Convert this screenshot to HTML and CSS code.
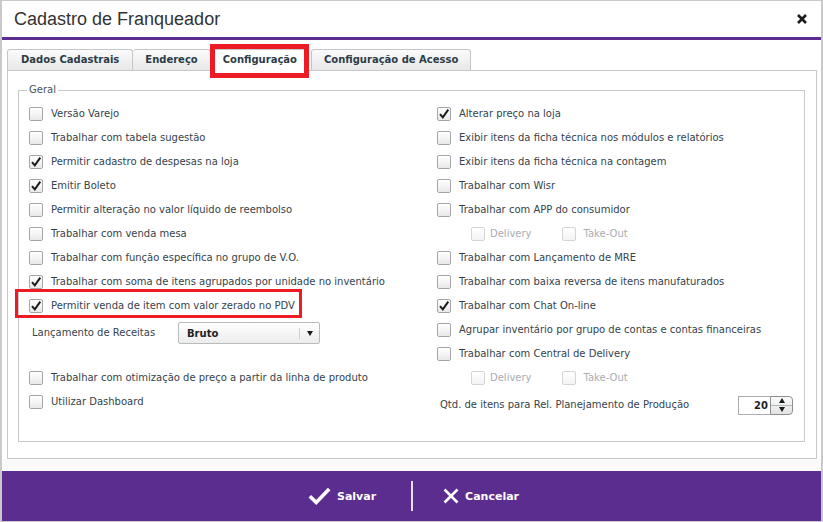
FILE: index.html
```html
<!DOCTYPE html>
<html lang="pt-BR">
<head>
<meta charset="utf-8">
<title>Cadastro de Franqueador</title>
<link rel="stylesheet" href="styles.css">
</head>
<body>
<div class="dialog">
  <header class="titlebar">
    <h1 class="title">Cadastro de Franqueador</h1>
    <span class="close" aria-label="Fechar">
      <svg width="10" height="10" viewBox="0 0 10 10"><path d="M1 1 L9 9 M9 1 L1 9" stroke="#1c1c1c" stroke-width="2.6" fill="none"/></svg>
    </span>
  </header>

  <main class="main">
    <nav class="tabs">
      <div class="tab tab-dados">Dados Cadastrais</div>
      <div class="tab tab-end">Endereço</div>
      <div class="tab tab-active">Configuração</div>
      <div class="tab tab-acesso">Configuração de Acesso</div>
    </nav>

    <section class="panel">
      <fieldset class="group">
        <legend class="legend">Geral</legend>
        <div class="cols">
          <div class="col">
            <div class="row"><span class="cb"></span><span class="lbl">Versão Varejo</span></div>
            <div class="row"><span class="cb"></span><span class="lbl">Trabalhar com tabela sugestão</span></div>
            <div class="row"><span class="cb on"><svg viewBox="0 0 14 14"><path d="M3 7.2 L5.8 10.3 L11.3 2.6"/></svg></span><span class="lbl">Permitir cadastro de despesas na loja</span></div>
            <div class="row"><span class="cb on"><svg viewBox="0 0 14 14"><path d="M3 7.2 L5.8 10.3 L11.3 2.6"/></svg></span><span class="lbl">Emitir Boleto</span></div>
            <div class="row"><span class="cb"></span><span class="lbl">Permitir alteração no valor líquido de reembolso</span></div>
            <div class="row"><span class="cb"></span><span class="lbl">Trabalhar com venda mesa</span></div>
            <div class="row"><span class="cb"></span><span class="lbl">Trabalhar com função específica no grupo de V.O.</span></div>
            <div class="row"><span class="cb on"><svg viewBox="0 0 14 14"><path d="M3 7.2 L5.8 10.3 L11.3 2.6"/></svg></span><span class="lbl">Trabalhar com soma de itens agrupados por unidade no inventário</span></div>
            <div class="row"><span class="mark"><span class="cb on"><svg viewBox="0 0 14 14"><path d="M3 7.2 L5.8 10.3 L11.3 2.6"/></svg></span><span class="lbl">Permitir venda de item com valor zerado no PDV</span></span></div>
            <div class="row row-select">
              <span class="field-lbl">Lançamento de Receitas</span>
              <span class="select"><span class="select-val">Bruto</span><span class="select-arrow"><span class="tri-down"></span></span></span>
            </div>
            <div class="row"><span class="cb"></span><span class="lbl">Trabalhar com otimização de preço a partir da linha de produto</span></div>
            <div class="row"><span class="cb"></span><span class="lbl">Utilizar Dashboard</span></div>
          </div>

          <div class="col">
            <div class="row"><span class="cb on"><svg viewBox="0 0 14 14"><path d="M3 7.2 L5.8 10.3 L11.3 2.6"/></svg></span><span class="lbl">Alterar preço na loja</span></div>
            <div class="row"><span class="cb"></span><span class="lbl">Exibir itens da ficha técnica nos módulos e relatórios</span></div>
            <div class="row"><span class="cb"></span><span class="lbl">Exibir itens da ficha técnica na contagem</span></div>
            <div class="row"><span class="cb"></span><span class="lbl">Trabalhar com Wisr</span></div>
            <div class="row"><span class="cb"></span><span class="lbl">Trabalhar com APP do consumidor</span></div>
            <div class="row row-sub">
              <span class="opt"><span class="cb off"></span><span class="lbl">Delivery</span></span>
              <span class="opt opt-2"><span class="cb off"></span><span class="lbl">Take-Out</span></span>
            </div>
            <div class="row"><span class="cb"></span><span class="lbl">Trabalhar com Lançamento de MRE</span></div>
            <div class="row"><span class="cb"></span><span class="lbl">Trabalhar com baixa reversa de itens manufaturados</span></div>
            <div class="row"><span class="cb on"><svg viewBox="0 0 14 14"><path d="M3 7.2 L5.8 10.3 L11.3 2.6"/></svg></span><span class="lbl">Trabalhar com Chat On-line</span></div>
            <div class="row"><span class="cb"></span><span class="lbl">Agrupar inventário por grupo de contas e contas financeiras</span></div>
            <div class="row"><span class="cb"></span><span class="lbl">Trabalhar com Central de Delivery</span></div>
            <div class="row row-sub">
              <span class="opt"><span class="cb off"></span><span class="lbl">Delivery</span></span>
              <span class="opt opt-2"><span class="cb off"></span><span class="lbl">Take-Out</span></span>
            </div>
            <div class="row row-qtd">
              <span class="field-lbl">Qtd. de itens para Rel. Planejamento de Produção</span>
              <span class="spin">
                <span class="spin-input">20</span>
                <span class="spin-btns">
                  <span class="spin-btn"><span class="tri-up"></span></span>
                  <span class="spin-btn"><span class="tri-down"></span></span>
                </span>
              </span>
            </div>
          </div>
        </div>
      </fieldset>
    </section>
  </main>

  <footer class="footer">
    <div class="actions">
      <span class="action action-save">
        <svg width="23" height="18" viewBox="0 0 23 18"><path d="M1.8 9.2 L8.2 15.4 L21.2 2" stroke="#fff" stroke-width="3.6" fill="none"/></svg>
        <span>Salvar</span>
      </span>
      <span class="divider"></span>
      <span class="action action-cancel">
        <svg width="16" height="16" viewBox="0 0 16 16"><path d="M1.5 1.5 L14.5 14.5 M14.5 1.5 L1.5 14.5" stroke="#fff" stroke-width="2.6" fill="none"/></svg>
        <span>Cancelar</span>
      </span>
    </div>
  </footer>
</div>
</body>
</html>
```

FILE: styles.css
```css
* { box-sizing: border-box; }

body {
  margin: 0;
  background: #cfcfcf;
  font-family: "DejaVu Sans", Verdana, sans-serif;
  font-size: 10px;
  color: #34434c;
}

.dialog {
  width: 823px;
  height: 522px;
  border-style: solid;
  border-color: #c9c9c9;
  border-width: 1px 2px 1px 2px;
  background: #fff;
  display: flex;
  flex-direction: column;
}

/* title bar */
.titlebar {
  height: 39px;
  flex: none;
  border-bottom: 3px solid #5b2d8e;
  display: flex;
  align-items: center;
  justify-content: space-between;
  padding: 0 14px 0 12px;
}
.title {
  margin: 0;
  font: 18px "Liberation Sans", Arial, sans-serif;
  color: #333;
}
.close { display: flex; }

/* main */
.main {
  flex: 1;
  display: flex;
  flex-direction: column;
  padding: 0 4px 0 5px;
  background: #fff;
}

.tabs {
  height: 30px;
  display: flex;
  align-items: flex-end;
}
.tab {
  height: 21px;
  line-height: 20px;
  padding: 0 13px;
  border: 1px solid #c4c7c9;
  border-bottom: none;
  border-radius: 3px 3px 0 0;
  background: linear-gradient(#fbfbfb, #e8e8e8);
  font-weight: bold;
  color: #2c3c47;
  white-space: nowrap;
}
.tab-end { padding: 0 12px; border-left: none; }
.tab-active {
  position: relative;
  z-index: 1;
  background: #fff;
  height: 22px;
  margin-bottom: -1px;
  padding: 0 11px;
  margin-left: 0;
}
.tab-active::after {
  content: "";
  position: absolute;
  left: -2px;
  right: -1px;
  top: -6px;
  bottom: -7px;
  border: 5px solid #ed1c24;
}
.tab-acesso { margin-left: 2px; padding: 0 12px; }

.panel {
  flex: 1;
  border: 1px solid #c5c9cb;
  background: #fff;
  padding: 13px 11px 16px 10px;
}

.group {
  margin: 0;
  border: 1px solid #c5c9cb;
  padding: 6px 10px 21px 10px;
  min-width: 0;
}
.legend {
  padding: 0 2px;
  margin-left: -2px;
  line-height: 12px;
  color: #4a5358;
}

.cols {
  display: grid;
  grid-template-columns: 408px 1fr;
}

.row {
  height: 24px;
  display: flex;
  align-items: center;
  white-space: nowrap;
}

.cb {
  flex: none;
  width: 14px;
  height: 14px;
  border: 1px solid #a4a7a9;
  border-radius: 2px;
  background: linear-gradient(#ffffff, #e9e9e9);
  margin-right: 8px;
  display: flex;
  align-items: center;
  justify-content: center;
}
.cb svg { width: 14px; height: 14px; flex: none; margin: -1px; }
.cb svg path { fill: none; stroke: #1d1d1d; stroke-width: 2; }
.cb.off {
  border-color: #d3d5d6;
  background: linear-gradient(#ffffff, #f3f3f3);
  margin-right: 5px;
}

.lbl { line-height: 14px; }

.mark {
  position: relative;
  align-self: stretch;
  display: flex;
  align-items: center;
}
.mark::after {
  content: "";
  position: absolute;
  left: -14px;
  right: -7px;
  top: -5px;
  bottom: 0;
  border: 3px solid #ed1c24;
}

.row-select {
  height: 48px;
  align-items: flex-start;
  padding-top: 4px;
}
.field-lbl {
  padding-left: 3px;
  line-height: 22px;
}
.row-select .field-lbl { width: 149px; }

.select {
  width: 142px;
  height: 22px;
  border: 1px solid #b9bcbe;
  border-radius: 2px;
  background: linear-gradient(#ffffff, #ececec);
  display: flex;
  align-items: center;
  padding-left: 8px;
  font-weight: bold;
  color: #222;
}
.select-val { flex: 1; }
.select-arrow {
  width: 20px;
  height: 11px;
  border-left: 1px solid #cfd1d2;
  display: flex;
  align-items: center;
  justify-content: center;
}
.tri-down {
  width: 0;
  height: 0;
  border-left: 3.5px solid transparent;
  border-right: 3.5px solid transparent;
  border-top: 5px solid #1a1a1a;
}
.tri-up {
  width: 0;
  height: 0;
  border-left: 3.5px solid transparent;
  border-right: 3.5px solid transparent;
  border-bottom: 5px solid #1a1a1a;
}

.row-sub { padding-left: 34px; color: #a9adb0; }
.opt { display: flex; align-items: center; }
.opt-2 { margin-left: 30px; }
.opt-2 .cb.off { margin-right: 8px; }

.row-qtd {
  height: 30px;
  justify-content: space-between;
  padding-right: 1px;
}
.spin {
  display: flex;
  height: 19px;
}
.spin-input {
  width: 32px;
  border: 1px solid #a9acae;
  border-right: none;
  background: #fff;
  text-align: right;
  padding-right: 2px;
  line-height: 17px;
  font-weight: bold;
  color: #1e1e1e;
}
.spin-btns {
  width: 23px;
  border: 1px solid #8c8f91;
  border-radius: 0 4px 4px 0;
  background: linear-gradient(#fbfbfb, #e3e3e3);
  display: flex;
  flex-direction: column;
}
.spin-btn {
  flex: 1;
  display: flex;
  align-items: center;
  justify-content: center;
}
.spin-btn + .spin-btn { border-top: 1px solid #b5b8ba; }

/* footer */
.footer {
  flex: none;
  padding-top: 12px;
  background: #fafafa;
}
.actions {
  height: 50px;
  background: #5b2d8e;
  display: flex;
  align-items: center;
  justify-content: center;
  padding-left: 4px;
  color: #fff;
  font-weight: bold;
  font-size: 11px;
}
.action {
  display: flex;
  align-items: center;
}
.action-save svg { margin-right: 6px; }
.action-cancel svg { margin-right: 6px; }
.divider {
  width: 2px;
  height: 30px;
  background: rgba(255, 255, 255, 0.85);
  margin: 0 30px 0 35px;
}
```
